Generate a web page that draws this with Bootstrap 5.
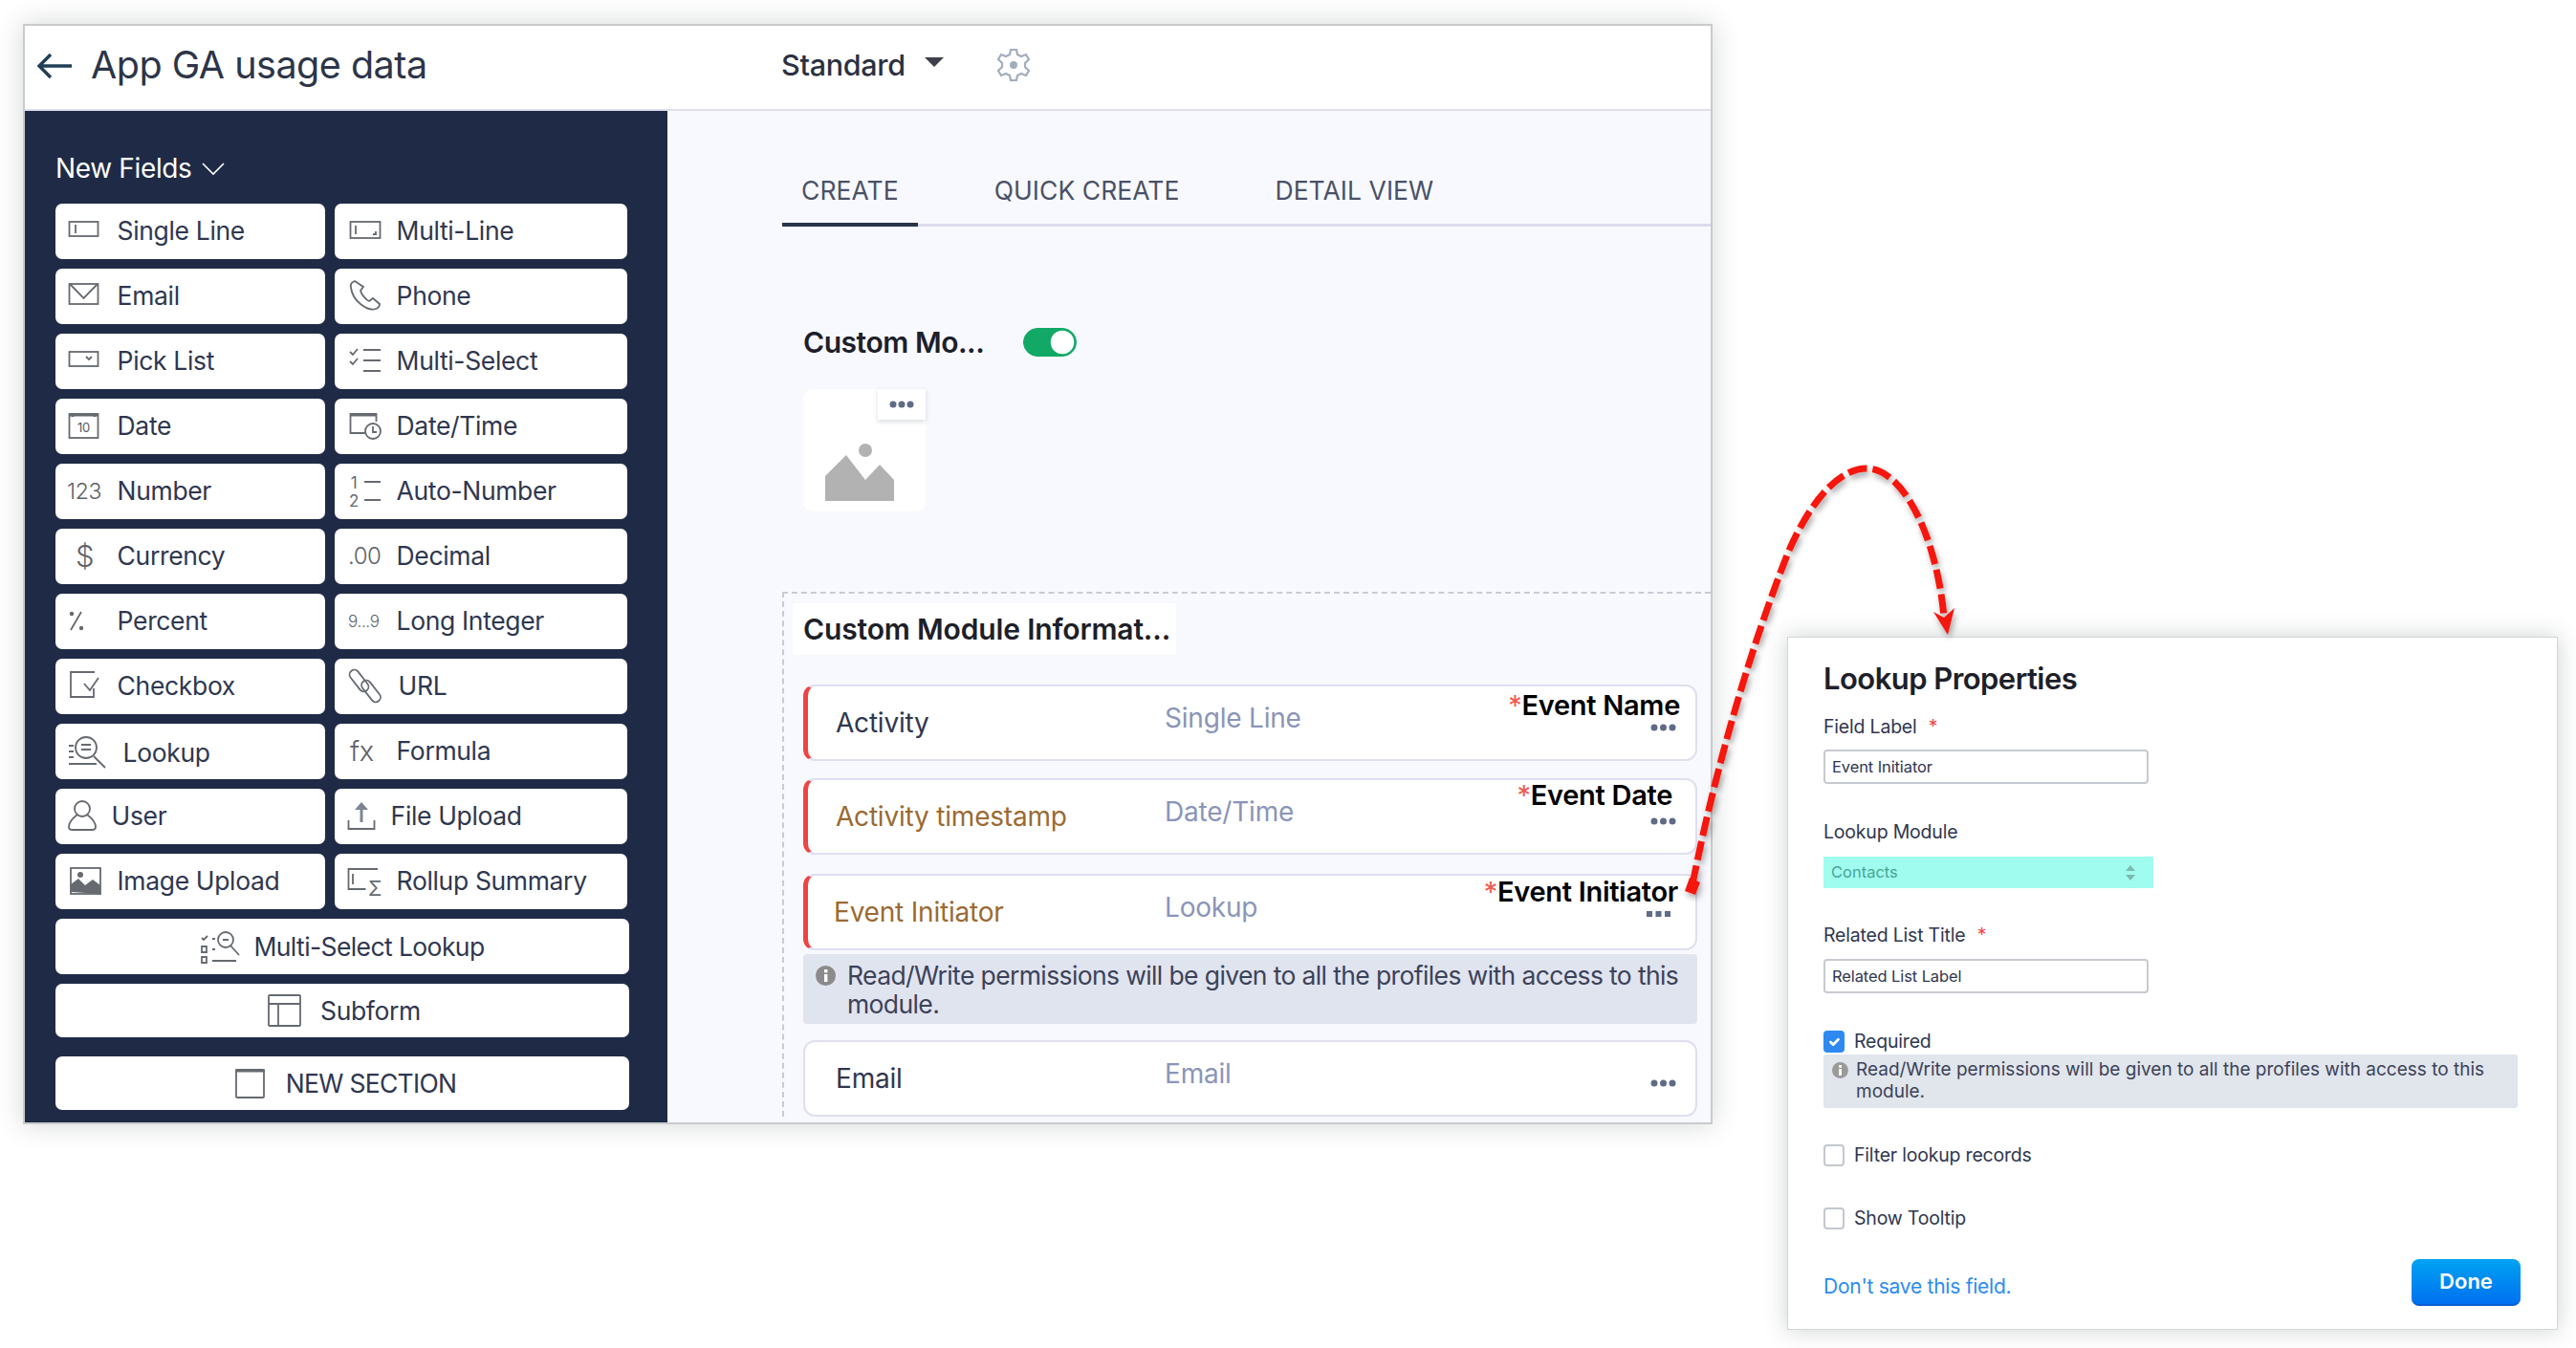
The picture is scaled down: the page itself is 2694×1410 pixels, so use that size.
<!DOCTYPE html>
<html lang="en">
<head>
  <meta charset="UTF-8">
  <meta name="viewport" content="width=device-width, initial-scale=1">
  <title>App GA usage data</title>
  <link href="https://cdn.jsdelivr.net/npm/bootstrap@5.3.3/dist/css/bootstrap.min.css" rel="stylesheet">
  <style>
    html, body { margin: 0; background: #fff; overflow: hidden; }
    body { font-family: Inter, "Liberation Sans", sans-serif; color: #2f3750; }
    .stage { position: relative; width: 2694px; height: 1410px; }

    /* app window */
    .app-win { position: absolute; left: 24px; top: 25px; width: 1767px; height: 1151px; border: 2px solid #c9cbcb; background: #fff; box-shadow: 0 0 26px rgba(60, 70, 70, .22); display: flex; flex-direction: column; overflow: hidden; }
    .app-head { height: 89px; flex: none; border-bottom: 2px solid #dfdfee; display: flex; align-items: center; padding-bottom: 4px; }
    .back-ico { margin-left: 12px; width: 38px; height: 30px; }
    .app-title { margin: 0 0 0 19px; width: 722px; font-size: 39.5px; font-weight: 400; letter-spacing: -.5px; color: #2c3549; white-space: nowrap; line-height: 1; }
    .layout-pick { font-size: 30.5px; font-weight: 500; color: #2a3142; letter-spacing: -.3px; margin-bottom: 2px; }
    .layout-caret { width: 0; height: 0; border-left: 10px solid transparent; border-right: 10px solid transparent; border-top: 10px solid #3d4048; margin: 0 0 8px 20px; }
    .gear-ico { width: 36px; height: 36px; margin: 0 0 2px 55px; }
    .app-body { flex: 1; display: flex; min-height: 0; }

    /* field palette */
    .palette { width: 672px; flex: none; background: #1f2b46; padding: 41px 0 0 32px; }
    .palette-head { color: #fff; font-size: 28px; line-height: 38px; margin-bottom: 18px; letter-spacing: -.35px; }
    .palette-head svg { margin-left: 9px; vertical-align: 2px; }
    .fld-grid { display: grid; grid-template-columns: 282px 306px; column-gap: 10px; row-gap: 10px; width: 598px; }
    .fld-btn { display: flex; align-items: center; padding: 0; height: 58px; background: #fff; border: 0; border-radius: 7px; font-size: 26.5px; color: #2f3750; letter-spacing: -.35px; text-align: left; white-space: nowrap; }
    .fld-btn.wide { grid-column: 1 / 3; width: 600px; justify-content: center; padding-top: 2px; }
    .fld-btn.wide.low { height: 56px; }
    .fld-btn.wide.sect { height: 56px; margin-top: 10px; letter-spacing: -.7px; }
    .fld-btn.wide.multi { letter-spacing: -.6px; }
    .fld-ico { width: 64.6px; height: 44px; padding-left: 12px; flex: none; }
    .fld-ico svg { display: block; width: 44px; height: 44px; fill: none; stroke: #666a70; stroke-width: 1.8; }
    .fld-ico.tight { width: 58.6px; }
    .fld-ico.loose { width: 70.6px; }
    .fld-ico.long { width: 66.6px; }
    .glyph { color: #5d6168; font-weight: 300; line-height: 44px; display: block; }
    .wide-ico { width: 44px; height: 44px; fill: none; stroke: #666a70; stroke-width: 1.8; margin-right: 14px; }

    /* layout area */
    .canvas-area { flex: 1; min-width: 0; background: #f8f9fe; padding-top: 54px; overflow: hidden; }
    .tab-strip { margin-left: 120px; border-bottom: 3px solid #dddcec; gap: 60px; height: 67px; flex-wrap: nowrap; }
    .tab-strip .nav-link { padding: 0 20px; height: 67px; line-height: 58px; font-size: 26.5px; letter-spacing: .05px; color: #4a5166; white-space: nowrap; }
    .tab-strip .nav-link.active { border-bottom: 4px solid #2b3448; }
    .mod-line { margin: 103px 0 0 142px; height: 36px; display: flex; align-items: center; }
    .mod-name { font-size: 30px; font-weight: 600; color: #1d2029; letter-spacing: -.45px; width: 230px; }
    .mod-switch { padding: 0; margin: 0; min-height: 0; display: flex; }
    .mod-switch .form-check-input { width: 56px; height: 30px; margin: 0; background-color: #12a966; border-color: #12a966; background-image: url("data:image/svg+xml,%3csvg xmlns='http://www.w3.org/2000/svg' viewBox='-4 -4 8 8'%3e%3ccircle r='3.5' fill='%23fff'/%3e%3c/svg%3e"); }
    .mod-img { position: relative; width: 128px; height: 128px; background: #fff; border-radius: 10px; margin: 31px 0 0 142px; }
    .mod-img > svg { position: absolute; left: 22px; top: 57px; }
    .mod-menu { position: absolute; right: 0; top: 0; width: 50px; height: 32px; background: #fff; box-shadow: 0 2px 5px rgba(60, 70, 100, .2); display: flex; align-items: center; justify-content: center; }
    .zone { margin: 84px 0 0 120px; border-top: 2px dashed #c9cad6; border-left: 2px dashed #c9cad6; padding: 10px 14px 0 20px; }
    .zone-title { display: inline-block; width: 401px; height: 54px; margin-left: -11px; padding-left: 11px; line-height: 54px; background: #fff; font-size: 30px; font-weight: 600; color: #1d2029; letter-spacing: -.15px; white-space: nowrap; }
    .fld-row { position: relative; height: 80px; margin-top: 18px; background: #fff; border: 2px solid #dfdff0; border-radius: 12px; display: grid; grid-template-columns: 344px 1fr auto; align-items: center; padding-left: 32px; }
    .fld-row.first { margin-top: 31px; }
    .fld-row.gap20 { margin-top: 20px; }
    .fld-row.req { border-left: 5px solid #ef4444; padding-left: 29px; }
    .fld-name { font-size: 28px; color: #2f3750; letter-spacing: -.2px; white-space: nowrap; }
    .fld-name.tan { color: #9a6a33; }
    .fld-kind { font-size: 28px; color: #8b95b8; letter-spacing: -.2px; margin-bottom: 10px; }
    .row-dots { margin: 10px 20px 0 0; display: block; }
    .ann { position: absolute; font-size: 29px; font-weight: 600; color: #000; letter-spacing: -.3px; line-height: 36px; white-space: nowrap; }
    .ann.a1 { top: 2px; right: 16px; }
    .ann.a2 { top: -2px; right: 24px; }
    .ann.a3 { top: -1px; right: 18px; }
    .ann i { color: #f25a50; font-style: normal; font-weight: 400; }
    .perm-note { margin-top: 4px; height: 73px; background: #e0e4ef; border-radius: 4px; display: flex; padding: 7px 8px 0 13px; font-size: 26.5px; line-height: 30px; color: #3b4258; letter-spacing: -.62px; }
    .perm-note svg { flex: none; margin: 5px 12px 0 0; }
    .fld-row.after-note { margin-top: 17px; }
    .dots-sq { margin-right: 24px; margin-top: 4px; }

    /* lookup properties */
    .props { position: absolute; left: 1869px; top: 666px; width: 806px; height: 725px; background: #fff; border: 1px solid #d4d6d6; box-shadow: 0 0 22px rgba(60, 70, 70, .25); padding: 25px 40px 0 37px; color: #2f3750; }
    .props-title { font-size: 31px; font-weight: 600; color: #1d2029; line-height: 36px; letter-spacing: -.55px; margin: 0; }
    .prop-label { display: block; margin: 0; font-size: 19.5px; line-height: 24px; letter-spacing: -.2px; }
    .prop-label i { color: #ef4444; font-style: normal; margin-left: 7px; }
    .prop-input.form-control { width: 340px; height: 36px; padding: 0 7px; font-size: 16.5px; color: #2f3750; border: 2px solid #c7cad0; border-radius: 4px; letter-spacing: -.1px; }
    .prop-pick { width: 345px; height: 33px; background: #9ffcee; color: #4aa596; font-size: 16.5px; padding: 0 19px 0 8px; display: flex; align-items: center; justify-content: space-between; }
    .prop-arrows { display: flex; flex-direction: column; gap: 4px; }
    .prop-arrows b { display: block; width: 0; height: 0; border-left: 5px solid transparent; border-right: 5px solid transparent; }
    .prop-arrows b:first-child { border-bottom: 6px solid #7cb9ae; }
    .prop-arrows b:last-child { border-top: 6px solid #7cb9ae; }
    .mt-a { margin-top: 20px !important; }
    .mt-b { margin-top: 12px !important; }
    .mt-c { margin-top: 38px !important; }
    .mt-d { margin-top: 14px !important; }
    .mt-e { margin-top: 37px !important; }
    .mt-f { margin-top: 13px !important; }
    .mt-g { margin-top: 39px !important; }
    .mt-h { margin-top: 43px !important; }
    .prop-check { display: flex; align-items: center; gap: 10px; padding: 0; margin: 0; min-height: 23px; font-size: 19.5px; letter-spacing: -.2px; }
    .prop-check .form-check-input { width: 22px; height: 23px; margin: 0; float: none; border: 2px solid #c3c7cf; border-radius: 4px; }
    .prop-check .form-check-input:checked { background-color: #2e8af0; border-color: #2e8af0; }
    .prop-check .form-check-label { line-height: 23px; }
    .prop-note { margin-top: 2px; width: 726px; height: 56px; background: #e1e5ec; border-radius: 3px; display: flex; padding: 4px 8px 0 9px; font-size: 19px; line-height: 23px; color: #3b4258; letter-spacing: 0; }
    .prop-note svg { flex: none; margin: 4px 8px 0 0; }
    .prop-foot { margin-top: 31px; width: 729px; display: flex; justify-content: space-between; }
    .prop-foot a { font-size: 21px; color: #2a8cf0; text-decoration: none; margin-top: 13px; letter-spacing: -.25px; }
    .done-btn.btn { width: 114px; height: 49px; padding: 0; border: 0; border-bottom: 2px solid #0a5fd0; border-radius: 8px; color: #fff; font-size: 22px; font-weight: 600; background: linear-gradient(#00a3f2, #0070f0); }

    .flow-arrow { position: absolute; left: 0; top: 0; pointer-events: none; }
  </style>
</head>
<body>
<div class="stage">

  <div class="app-win">
    <div class="app-head">
      <svg class="back-ico" viewBox="0 0 38 30" fill="none" stroke="#1f3f55" stroke-width="3.4"><path d="M37 15H3M15 3 3 15l12 12"/></svg>
      <h1 class="app-title">App GA usage data</h1>
      <div class="layout-pick">Standard</div>
      <div class="layout-caret"></div>
      <svg class="gear-ico" viewBox="0 0 36 36" fill="none" stroke="#a3adbd" stroke-width="2.2"><path d="M15 2h6l1 5 4 2 5-2 3 5-4 4v4l4 4-3 5-5-2-4 2-1 5h-6l-1-5-4-2-5 2-3-5 4-4v-4l-4-4 3-5 5 2 4-2z"/><circle cx="18" cy="18" r="4" fill="#a3adbd" stroke="none"/></svg>
    </div>
    <div class="app-body">
      <aside class="palette">
        <div class="palette-head">New Fields<svg width="26" height="15" viewBox="0 0 26 15" fill="none" stroke="#fff" stroke-width="1.6"><path d="M2 2l11 11L24 2"/></svg></div>
        <div class="fld-grid">
          <button class="fld-btn" type="button"><span class="fld-ico"><svg viewBox="0 0 44 44"><rect x="2.5" y="12" width="30" height="15"/><path d="M9 15v9"/></svg></span>Single Line</button>
          <button class="fld-btn" type="button"><span class="fld-ico"><svg viewBox="0 0 44 44"><rect x="4.5" y="12" width="31" height="17"/><path d="M10 16v9M31 22v3h-3"/></svg></span>Multi-Line</button>

          <button class="fld-btn" type="button"><span class="fld-ico"><svg viewBox="0 0 44 44"><rect x="2.5" y="9" width="30" height="21"/><path d="M3 9l14.500 15L32 9"/></svg></span>Email</button>
          <button class="fld-btn" type="button"><span class="fld-ico"><svg viewBox="0 0 44 44"><path d="M9 6c-3 1-5 3-4 7 1 7 5 13 10 17 5 4 11 7 16 5 3-1 4-3 4-5l-7-6-4 3c-3-1-8-7-9-11l3-4z"/></svg></span>Phone</button>

          <button class="fld-btn" type="button"><span class="fld-ico"><svg viewBox="0 0 44 44"><rect x="2.5" y="12" width="30" height="15"/><path d="M20 17l3 3 3-3"/></svg></span>Pick List</button>
          <button class="fld-btn" type="button"><span class="fld-ico"><svg viewBox="0 0 44 44"><path d="M18 10h18M18 21h18M18 32h18M4 12l3 3 5-6M4 22l3 3 5-6"/></svg></span>Multi-Select</button>

          <button class="fld-btn" type="button"><span class="fld-ico"><svg viewBox="0 0 44 44"><rect x="2.500" y="9" width="30" height="25"/><path d="M2 10h31M6 8v4M29 8v4" stroke-width="3"/><text x="17.500" y="28" font-size="13" text-anchor="middle" fill="#555a60" stroke="none">10</text></svg></span>Date</button>
          <button class="fld-btn" type="button"><span class="fld-ico"><svg viewBox="0 0 44 44"><path d="M20 29H4.500V9h27v8" /><path d="M4 10h28" stroke-width="3"/><circle cx="28" cy="27" r="8" fill="#fff"/><path d="M28 22v6h4"/></svg></span>Date/Time</button>

          <button class="fld-btn" type="button"><span class="fld-ico"><span class="glyph" style="font-size:23px">123</span></span>Number</button>
          <button class="fld-btn" type="button"><span class="fld-ico"><svg viewBox="0 0 44 44"><text x="8" y="19" font-size="17" text-anchor="middle" fill="#666a70" stroke="none">1</text><text x="8" y="38" font-size="17" text-anchor="middle" fill="#666a70" stroke="none">2</text><path d="M19 12h17M19 31h17"/></svg></span>Auto-Number</button>

          <button class="fld-btn" type="button"><span class="fld-ico"><span class="glyph" style="font-size:31px;padding-left:9px">$</span></span>Currency</button>
          <button class="fld-btn" type="button"><span class="fld-ico"><span class="glyph" style="font-size:24px;padding-left:2px;letter-spacing:-.5px">.00</span></span>Decimal</button>

          <button class="fld-btn" type="button"><span class="fld-ico"><svg viewBox="0 0 44 44"><path d="M15 12 4 31"/><circle cx="5" cy="14" r="1.300" fill="#666a70"/><circle cx="15" cy="29" r="1.300" fill="#666a70"/></svg></span>Percent</button>
          <button class="fld-btn" type="button"><span class="fld-ico"><span class="glyph" style="font-size:17px;padding-left:2px">9...9</span></span>Long Integer</button>

          <button class="fld-btn" type="button"><span class="fld-ico"><svg viewBox="0 0 44 44"><path d="M29 7H4v26h24V24"/><path d="M18 19l6 7 9-13"/></svg></span>Checkbox</button>
          <button class="fld-btn" type="button"><span class="fld-ico long"><svg viewBox="0 0 44 44"><rect x="8.500" y="3" width="10" height="26" rx="5" transform="rotate(-38 13.500 16)"/><rect x="21" y="14" width="10" height="26" rx="5" transform="rotate(-38 26 27)"/></svg></span>URL</button>

          <button class="fld-btn" type="button"><span class="fld-ico loose"><svg viewBox="0 0 44 44" style="width:44px"><circle cx="20" cy="18" r="11"/><path d="M28 27l12 12M15 15h10M15 20h10M2 16h5M2 22h5M2 28h5M2 35h29"/></svg></span><span style="padding-top:4px">Lookup</span></button>
          <button class="fld-btn" type="button"><span class="fld-ico"><span class="glyph" style="font-size:29px;padding-left:4px">fx</span></span>Formula</button>

          <button class="fld-btn" type="button"><span class="fld-ico tight"><svg viewBox="0 0 44 44"><circle cx="16" cy="14" r="8"/><path d="M11 20c-4 3-9 7-9 13 0 3 2 3 4 3h20c3 0 4-1 4-3 0-6-5-10-9-13"/></svg></span>User</button>
          <button class="fld-btn" type="button"><span class="fld-ico tight"><svg viewBox="0 0 44 44"><path d="M2.500 26v9h27v-9"/><path d="M16 28V12" stroke="#7d8493" stroke-width="3"/><path d="M9 15l7-8 7 8z" fill="#7d8493" stroke="none"/></svg></span>File Upload</button>

          <button class="fld-btn" type="button"><span class="fld-ico"><svg viewBox="0 0 44 44"><rect x="4" y="8" width="31" height="27" fill="#fff"/><path d="M4 33V25l8-6 7 7 8-6 8 6v9z" fill="#666a70" stroke="none"/><circle cx="14" cy="15" r="3" fill="#666a70" stroke="none"/></svg></span>Image Upload</button>
          <button class="fld-btn" type="button"><span class="fld-ico"><svg viewBox="0 0 44 44"><path d="M33 9H2.500v21h18M7 14v11"/><text x="30" y="37" font-size="21" text-anchor="middle" fill="#666a70" stroke="none">Σ</text></svg></span>Rollup Summary</button>

          <button class="fld-btn wide multi" type="button"><svg class="wide-ico" viewBox="0 0 44 44" style="margin-right:12px"><circle cx="27" cy="14" r="8"/><path d="M32 20l9 10M24 14h6M2 12l2 2 4-4M13 13h3M2 21h5v6H2zM13 24h3M2 32h5v6H2zM13 36h25"/></svg>Multi-Select Lookup</button>
          <button class="fld-btn wide low" type="button"><svg class="wide-ico" viewBox="0 0 44 44" style="margin-right:15px"><rect x="5" y="5" width="33" height="32" rx="1"/><path d="M5 14h33M15 14v23"/></svg>Subform</button>
          <button class="fld-btn wide sect" type="button"><svg class="wide-ico" viewBox="0 0 44 44" style="margin-right:16px"><rect x="8" y="7" width="29" height="29" rx="1"/><path d="M7 8h31" stroke-width="3"/></svg>NEW SECTION</button>
        </div>
      </aside>

      <main class="canvas-area">
        <ul class="nav tab-strip">
          <li class="nav-item"><a class="nav-link active" href="#">CREATE</a></li>
          <li class="nav-item"><a class="nav-link" href="#">QUICK CREATE</a></li>
          <li class="nav-item"><a class="nav-link" href="#">DETAIL VIEW</a></li>
        </ul>

        <div class="mod-line">
          <span class="mod-name">Custom Mo...</span>
          <div class="form-check form-switch mod-switch"><input class="form-check-input" type="checkbox" checked></div>
        </div>
        <div class="mod-img">
          <svg width="74" height="62" viewBox="0 0 74 62" fill="#b2b2b2"><path d="M1 60V34L23 12l20 26 15-16 15 16v22z"/><ellipse cx="43" cy="7" rx="7" ry="7"/></svg>
          <div class="mod-menu"><svg width="26" height="8" viewBox="0 0 26 8" fill="#5f6b87"><circle cx="4" cy="4" r="3.500"/><circle cx="13" cy="4" r="3.500"/><circle cx="22" cy="4" r="3.500"/></svg></div>
        </div>

        <section class="zone">
          <div class="zone-title">Custom Module Informat...</div>

          <div class="fld-row req first">
            <span class="fld-name">Activity</span><span class="fld-kind">Single Line</span>
            <svg class="row-dots" width="27" height="8" viewBox="0 0 27 8" fill="#5f6b87"><circle cx="4" cy="4" r="3.500"/><circle cx="13.500" cy="4" r="3.500"/><circle cx="23" cy="4" r="3.500"/></svg>
            <span class="ann a1"><i>*</i>Event Name</span>
          </div>
          <div class="fld-row req">
            <span class="fld-name tan">Activity timestamp</span><span class="fld-kind">Date/Time</span>
            <svg class="row-dots" width="27" height="8" viewBox="0 0 27 8" fill="#5f6b87"><circle cx="4" cy="4" r="3.500"/><circle cx="13.500" cy="4" r="3.500"/><circle cx="23" cy="4" r="3.500"/></svg>
            <span class="ann a2"><i>*</i>Event Date</span>
          </div>
          <div class="fld-row req gap20">
            <span class="fld-name tan" style="margin-left:-2px">Event Initiator</span><span class="fld-kind">Lookup</span>
            <svg class="row-dots dots-sq" width="27" height="8" viewBox="0 0 27 8" fill="#5f6b87"><rect y="1" width="6" height="6"/><rect x="9.500" y="1" width="6" height="6"/><rect x="19" y="1" width="6" height="6"/></svg>
            <span class="ann a3"><i>*</i>Event Initiator</span>
          </div>
          <div class="perm-note">
            <svg width="21" height="21" viewBox="0 0 21 21"><circle cx="10.500" cy="10.500" r="10.500" fill="#8b8b8b"/><rect x="9" y="9" width="3.400" height="8" fill="#fff"/><rect x="9" y="4" width="3.400" height="3.400" fill="#fff"/></svg>
            <div>Read/Write permissions will be given to all the profiles with access to this module.</div>
          </div>
          <div class="fld-row after-note">
            <span class="fld-name">Email</span><span class="fld-kind">Email</span>
            <svg class="row-dots" width="27" height="8" viewBox="0 0 27 8" fill="#5f6b87"><circle cx="4" cy="4" r="3.500"/><circle cx="13.500" cy="4" r="3.500"/><circle cx="23" cy="4" r="3.500"/></svg>
          </div>
        </section>
      </main>
    </div>
  </div>

  <div class="props">
    <h2 class="props-title">Lookup Properties</h2>
    <label class="prop-label mt-a">Field Label <i>*</i></label>
    <input class="form-control prop-input mt-b" type="text" value="Event Initiator">
    <label class="prop-label mt-c">Lookup Module</label>
    <div class="prop-pick mt-d">Contacts<span class="prop-arrows"><b></b><b></b></span></div>
    <label class="prop-label mt-e">Related List Title <i>*</i></label>
    <input class="form-control prop-input mt-f" type="text" value="Related List Label">
    <div class="form-check prop-check mt-g">
      <input class="form-check-input" type="checkbox" id="chkRequired" checked>
      <label class="form-check-label" for="chkRequired">Required</label>
    </div>
    <div class="prop-note">
      <svg width="17" height="17" viewBox="0 0 17 17"><circle cx="8.500" cy="8.500" r="8.500" fill="#9a9a9a"/><rect x="7.200" y="7" width="2.800" height="7" fill="#fff"/><rect x="7.200" y="3" width="2.800" height="2.800" fill="#fff"/></svg>
      <div>Read/Write permissions will be given to all the profiles with access to this module.</div>
    </div>
    <div class="form-check prop-check mt-c">
      <input class="form-check-input" type="checkbox" id="chkFilter">
      <label class="form-check-label" for="chkFilter">Filter lookup records</label>
    </div>
    <div class="form-check prop-check mt-h">
      <input class="form-check-input" type="checkbox" id="chkTooltip">
      <label class="form-check-label" for="chkTooltip">Show Tooltip</label>
    </div>
    <div class="prop-foot">
      <a href="#">Don't save this field.</a>
      <button class="btn done-btn" type="button">Done</button>
    </div>
  </div>

  <!-- annotation arrow between the field row and the panel -->
  <svg class="flow-arrow" width="2694" height="1410" viewBox="0 0 2694 1410" fill="none">
    <defs><filter id="arrowShadow" x="-20%" y="-20%" width="140%" height="140%"><feDropShadow dx="2" dy="4" stdDeviation="3" flood-color="#000" flood-opacity=".35"/></filter></defs>
    <g filter="url(#arrowShadow)">
      <path d="M1770 925C1795 800 1830 680 1870 578C1895 520 1925 490 1952 490C1990 490 2025 560 2033 645" stroke="#f5190f" stroke-width="7" stroke-dasharray="20 6"/>
      <path d="M2037 664 2022 640 2033 646 2044 636z" fill="#f5190f"/>
      <path d="M1767 918 1778 923 1773 936 1762 932z" fill="#f5190f"/>
    </g>
  </svg>
</div>
<script src="https://cdn.jsdelivr.net/npm/bootstrap@5.3.3/dist/js/bootstrap.bundle.min.js"></script>
</body>
</html>
